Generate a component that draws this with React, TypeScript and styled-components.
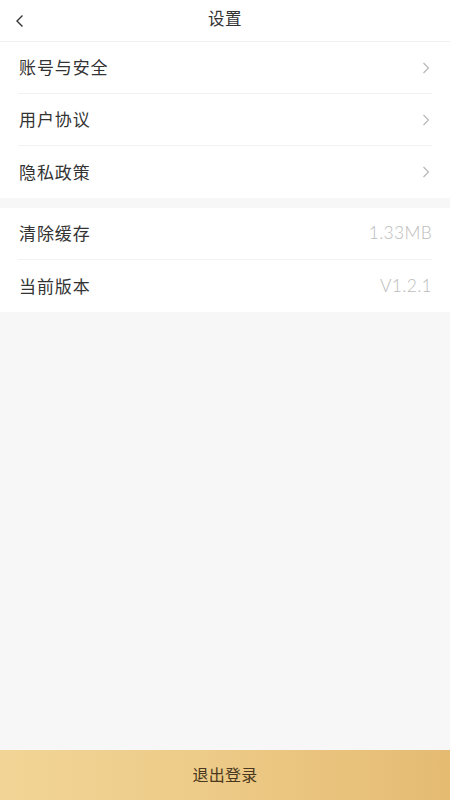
import React from "react";
import styled, { createGlobalStyle } from "styled-components";

const Global = createGlobalStyle`
  html, body { margin: 0; padding: 0; background: #f7f7f7; }
  body { font-family: "Noto Sans CJK SC", "Noto Sans", sans-serif; }
  * { box-sizing: border-box; }
`;

const Page = styled.div`
  width: 450px;
  height: 800px;
  display: flex;
  flex-direction: column;
  background: #f7f7f7;
`;

const Header = styled.div`
  height: 42px;
  flex: none;
  background: #fff;
  display: grid;
  grid-template-columns: 60px 1fr 60px;
  align-items: center;
  border-bottom: 1px solid #f1f1f1;
`;

const Back = styled.div`
  display: flex;
  align-items: center;
  padding-left: 14px;
  height: 100%;
`;

const Title = styled.div`
  text-align: center;
  font-size: 16.5px;
  letter-spacing: 0.5px;
  color: #333;
  line-height: 1;
  margin-top: -5px;
`;

const Group = styled.div<{ $top: number }>`
  background: #fff;
  margin-top: ${(p) => p.$top}px;
  flex: none;
`;

const Row = styled.div<{ $last?: boolean }>`
  height: 52px;
  margin: 0 18px 0 18px;
  display: flex;
  align-items: center;
  justify-content: space-between;
  border-bottom: ${(p) => (p.$last ? "none" : "1px solid #f2f2f2")};
`;

const Label = styled.span`
  font-size: 17px;
  letter-spacing: 0.9px;
  color: #333;
  padding-left: 1px;
  margin-top: -2px;
`;

const Value = styled.span`
  font-family: "Lato", "Noto Sans", sans-serif;
  font-weight: 300;
  font-size: 17.5px;
  letter-spacing: 0.3px;
  color: #bcbcbc;
  margin-top: -2px;
`;

const Spacer = styled.div`
  flex: 1;
`;

const LogoutBar = styled.div`
  height: 50px;
  flex: none;
  display: flex;
  align-items: center;
  justify-content: center;
  background: linear-gradient(90deg, #f2d596 0%, #edcb88 45%, #e5bb72 100%);
  color: #4a3920;
  font-size: 16px;
  letter-spacing: 0.3px;
  padding-bottom: 2px;
`;

const Chevron = () => (
  <svg width="10" height="14" viewBox="0 0 10 14" style={{ marginRight: 1 }}>
    <path d="M2.5 2 L7.5 7 L2.5 12" fill="none" stroke="#b5b5b5" strokeWidth="1.1" />
  </svg>
);

const BackIcon = () => (
  <svg width="12" height="16" viewBox="0 0 12 16">
    <path d="M8.5 2.5 L3 8 L8.5 13.5" fill="none" stroke="#333" strokeWidth="1.4" />
  </svg>
);

export default function App() {
  return (
    <>
      <Global />
      <Page>
        <Header>
          <Back>
            <BackIcon />
          </Back>
          <Title>设置</Title>
          <div />
        </Header>
        <Group $top={0}>
          <Row>
            <Label>账号与安全</Label>
            <Chevron />
          </Row>
          <Row>
            <Label>用户协议</Label>
            <Chevron />
          </Row>
          <Row $last>
            <Label>隐私政策</Label>
            <Chevron />
          </Row>
        </Group>
        <Group $top={10}>
          <Row>
            <Label>清除缓存</Label>
            <Value>1.33MB</Value>
          </Row>
          <Row $last>
            <Label>当前版本</Label>
            <Value>V1.2.1</Value>
          </Row>
        </Group>
        <Spacer />
        <LogoutBar>退出登录</LogoutBar>
      </Page>
    </>
  );
}
